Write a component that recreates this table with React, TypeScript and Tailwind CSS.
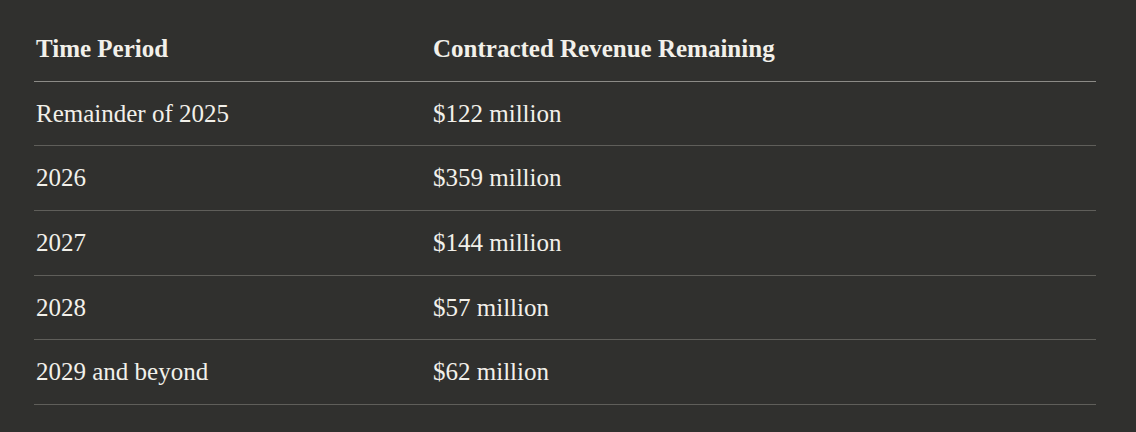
const rows = [
  { period: 'Remainder of 2025', revenue: '$122 million' },
  { period: '2026', revenue: '$359 million' },
  { period: '2027', revenue: '$144 million' },
  { period: '2028', revenue: '$57 million' },
  { period: '2029 and beyond', revenue: '$62 million' },
];

export default function App() {
  return (
    <div
      className="min-h-screen bg-[#30302e] pl-[34px] pr-[40px] pt-[17px] text-[#f2f0ea]"
      style={{ fontFamily: '"Liberation Serif", "Times New Roman", serif' }}
    >
      <table className="w-full border-collapse text-left">
        <thead>
          <tr className="h-[64px] border-b border-[#8c8b87]">
            <th className="w-[399px] pl-[2px] align-middle text-[25px] font-bold">Time Period</th>
            <th className="align-middle text-[25px] font-bold">Contracted Revenue Remaining</th>
          </tr>
        </thead>
        <tbody>
          {rows.map((row) => (
            <tr key={row.period} className="h-[64.7px] border-b border-[#5f5e5a]">
              <td className="pl-[2px] align-middle text-[25px]">{row.period}</td>
              <td className="align-middle text-[25px]">{row.revenue}</td>
            </tr>
          ))}
        </tbody>
      </table>
    </div>
  );
}
